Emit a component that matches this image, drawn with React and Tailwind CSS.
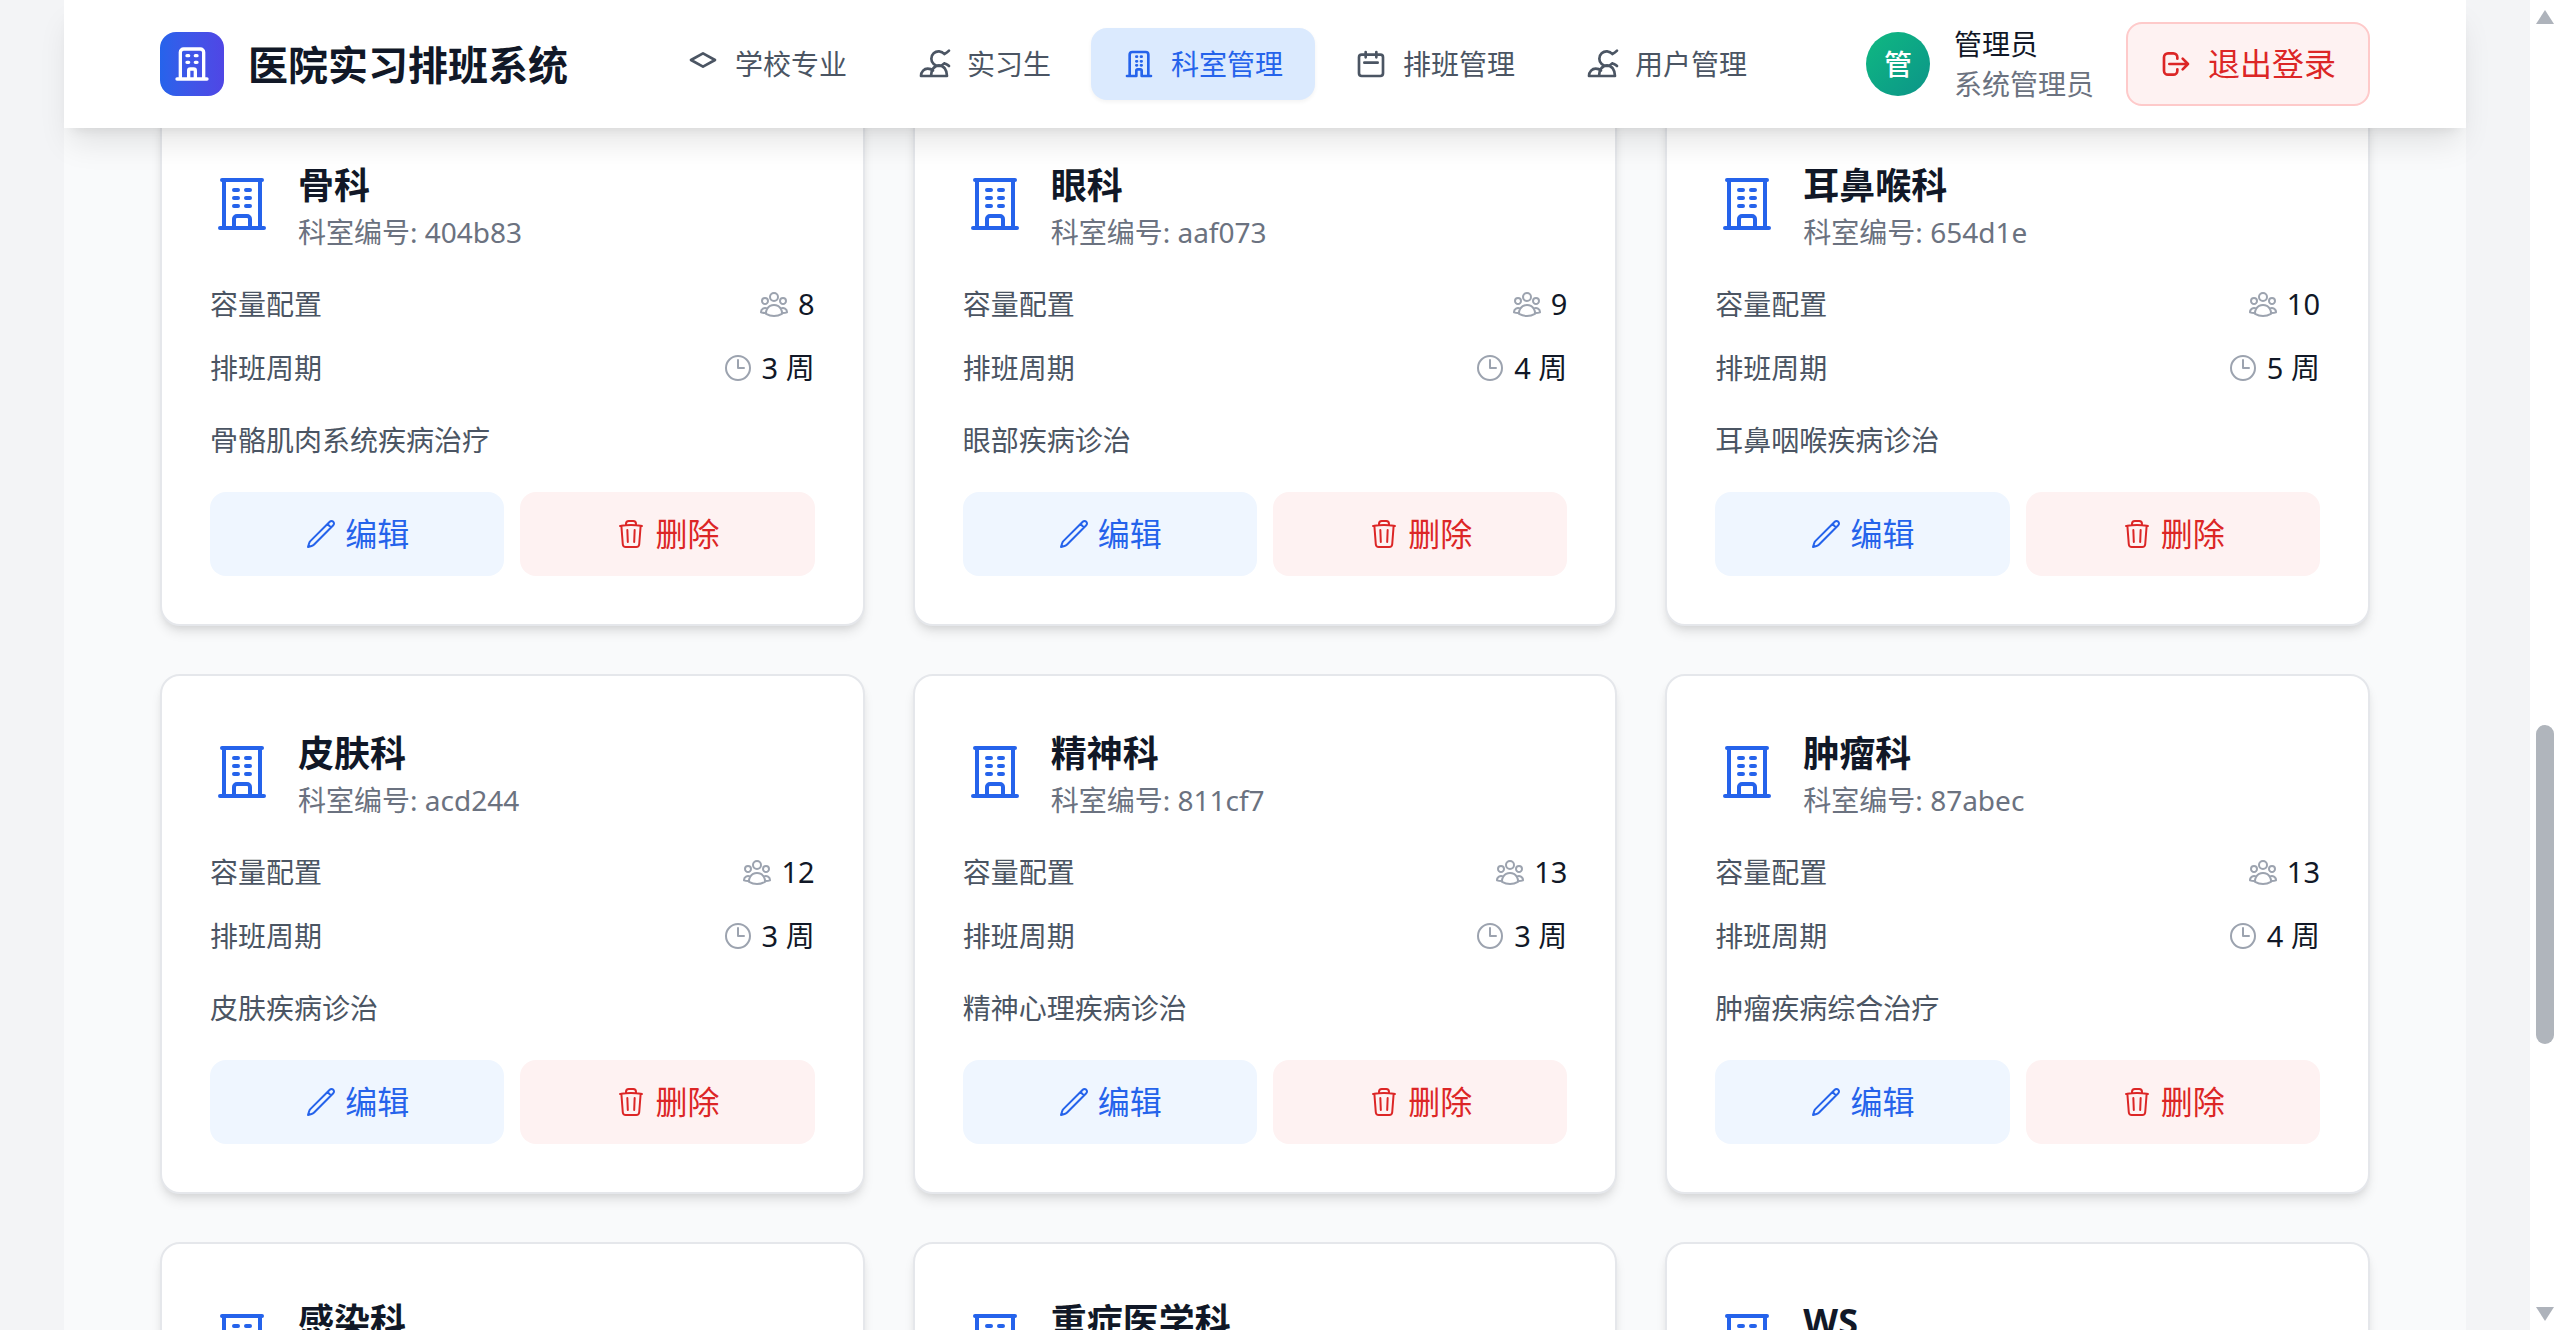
const navItems = [
    { label: '学校专业', icon: 'cap' },
    { label: '实习生', icon: 'people' },
    { label: '科室管理', icon: 'dept', active: true },
    { label: '排班管理', icon: 'calendar' },
    { label: '用户管理', icon: 'people' },
];

const departments = [
    { name: '骨科', code: '404b83', capacity: 8, weeks: 3, desc: '骨骼肌肉系统疾病治疗' },
    { name: '眼科', code: 'aaf073', capacity: 9, weeks: 4, desc: '眼部疾病诊治' },
    { name: '耳鼻喉科', code: '654d1e', capacity: 10, weeks: 5, desc: '耳鼻咽喉疾病诊治' },
    { name: '皮肤科', code: 'acd244', capacity: 12, weeks: 3, desc: '皮肤疾病诊治' },
    { name: '精神科', code: '811cf7', capacity: 13, weeks: 3, desc: '精神心理疾病诊治' },
    { name: '肿瘤科', code: '87abec', capacity: 13, weeks: 4, desc: '肿瘤疾病综合治疗' },
    { name: '感染科' },
    { name: '重症医学科' },
    { name: 'WS' },
];

const Icon = ({ d, className, width = 2 }) => (
    <svg viewBox="0 0 24 24" fill="none" stroke="currentColor" strokeWidth={width} strokeLinecap="round" strokeLinejoin="round" className={className}>
        <path d={d} />
    </svg>
);

const paths = {
    building: 'M19 21V5a2 2 0 00-2-2H7a2 2 0 00-2 2v16m14 0h2m-2 0h-5m-9 0H3m2 0h5M9 7h1m-1 4h1m4-4h1m-1 4h1m-5 10v-5a1 1 0 011-1h2a1 1 0 011 1v5m-4 0h4',
    dept: 'M19 21V5a2 2 0 00-2-2H7a2 2 0 00-2 2v16m14 0h2m-2 0h-5m-9 0H3m2 0h5M10 6.5h.5m-.5 3.5h.5m-.5 3h.5m3-6.5h.5m-.5 3.5h.5m-.5 3h.5M10 21v-4a1 1 0 011-1h2a1 1 0 011 1v4',
    office: 'M3.75 21h16.5M4.5 3h15M5.25 3v18m13.5-18v18M9 6.75h1.5m-1.5 3h1.5m-1.5 3h1.5m3-6H15m-1.5 3H15m-1.5 3H15M9 21v-3.375c0-.621.504-1.125 1.125-1.125h3.75c.621 0 1.125.504 1.125 1.125V21',
    cap: 'M12 14l9-5-9-5-9 5 9 5z',
    people: 'M1.5 21H21c0-4.500-2.500-8-6-8s-6 3.500-6 8M1.500 21c0-3.500 2.500-5.500 5-5.500 1.500 0 3 .5 4 1.500M19 4.500a5.500 5.500 0 100 7M19 4.500c1-.5 2.500-1.500 3.500-2.500M19 11.500c1 .5 2.500 1 3.500 2',
    calendar: 'M8 7V3m8 4V3m-9 8h10M5 21h14a2 2 0 002-2V7a2 2 0 00-2-2H5a2 2 0 00-2 2v12a2 2 0 002 2z',
    logout: 'M17 16l4-4m0 0l-4-4m4 4H7m6 4v1a3 3 0 01-3 3H6a3 3 0 01-3-3V7a3 3 0 013-3h4a3 3 0 013 3v1',
    group: 'M18 18.72a9.094 9.094 0 0 0 3.741-.479 3 3 0 0 0-4.682-2.72m.94 3.198.001.031c0 .225-.012.447-.037.666A11.944 11.944 0 0 1 12 21c-2.17 0-4.207-.576-5.963-1.584A6.062 6.062 0 0 1 6 18.719m12 0a5.971 5.971 0 0 0-.941-3.197m0 0A5.995 5.995 0 0 0 12 12.75a5.995 5.995 0 0 0-5.058 2.772m0 0a3 3 0 0 0-4.681 2.72 8.986 8.986 0 0 0 3.74.477m.94-3.197a5.971 5.971 0 0 0-.94 3.197M15 6.75a3 3 0 1 1-6 0 3 3 0 0 1 6 0Zm6 3a2.25 2.25 0 1 1-4.5 0 2.25 2.25 0 0 1 4.5 0Zm-13.5 0a2.25 2.25 0 1 1-4.5 0 2.25 2.25 0 0 1 4.5 0Z',
    clock: 'M12 6v6h4.5m4.5 0a9 9 0 1 1-18 0 9 9 0 0 1 18 0Z',
    pencil: 'm16.862 4.487 1.687-1.688a1.875 1.875 0 1 1 2.652 2.652L6.832 19.82a4.5 4.5 0 0 1-1.897 1.13l-2.685.8.8-2.685a4.5 4.5 0 0 1 1.13-1.897L16.863 4.487Zm0 0L19.5 7.125',
    trash: 'm14.74 9-.346 9m-4.788 0L9.26 9m9.968-3.21c.342.052.682.107 1.022.166m-1.022-.165L18.16 19.673a2.25 2.25 0 0 1-2.244 2.077H8.084a2.25 2.25 0 0 1-2.244-2.077L4.772 5.79m14.456 0a48.108 48.108 0 0 0-3.478-.397m-12 .562c.34-.059.68-.114 1.022-.165m0 0a48.11 48.11 0 0 1 3.478-.397m7.5 0v-.916c0-1.18-.91-2.164-2.09-2.201a51.964 51.964 0 0 0-3.32 0c-1.18.037-2.09 1.022-2.09 2.201v.916m7.5 0a48.667 48.667 0 0 0-7.5 0',
};

const Header = () => (
    <header className="relative z-10 flex h-[128px] shrink-0 items-center justify-between bg-white px-24 shadow-[0_20px_30px_-6px_rgb(0_0_0/0.1),0_8px_12px_-8px_rgb(0_0_0/0.1)]">
        <div className="flex items-center gap-6">
            <div className="flex h-16 w-16 items-center justify-center rounded-2xl bg-gradient-to-r from-[#2563eb] to-[#4f46e5] text-white">
                <Icon d={paths.building} className="h-10 w-10" />
            </div>
            <h1 className="pt-0.5 text-[40px] leading-[54px] font-bold text-[#111827]">医院实习排班系统</h1>
        </div>
        <nav className="flex items-center gap-2">
            {navItems.map((item) => (
                <a
                    key={item.label}
                    className={`flex items-center gap-4 rounded-2xl px-8 py-4 text-[28px] leading-10 ${item.active ? 'bg-[#dbeafe] text-[#2563eb] shadow-[0_2px_4px_0_rgb(0_0_0/0.05)]' : 'text-[#4b5563]'}`}
                >
                    <Icon d={paths[item.icon]} className="h-8 w-8" />
                    {item.label}
                </a>
            ))}
        </nav>
        <div className="flex items-center gap-8">
            <div className="flex items-center gap-6">
                <div className="flex h-16 w-16 items-center justify-center rounded-full bg-gradient-to-br from-[#10b981] to-[#0d9488] text-[28px] leading-10 font-medium text-white">管</div>
                <div>
                    <p className="text-[28px] leading-10 text-[#111827]">管理员</p>
                    <p className="text-[28px] leading-10 text-[#6b7280]">系统管理员</p>
                </div>
            </div>
            <button className="flex items-center gap-4 rounded-2xl border-2 border-[#fecaca] bg-[#fef2f2] px-8 py-4 text-[32px] leading-12 text-[#dc2626]">
                <Icon d={paths.logout} className="h-8 w-8" />
                退出登录
            </button>
        </div>
    </header>
);

const DepartmentCard = ({ dept }) => (
    <div className="h-[520px] rounded-[20px] border-2 border-[#e5e7eb] bg-white p-12 shadow-[0_8px_12px_-2px_rgb(0_0_0/0.1),0_4px_8px_-4px_rgb(0_0_0/0.1)]">
        <div className="mb-8 flex items-center gap-6">
            <Icon d={paths.office} width={1.5} className="h-16 w-16 shrink-0 text-[#2563eb]" />
            <div className="h-24">
                <h3 className="pt-1 text-[36px] leading-[52px] font-bold text-[#111827]">{dept.name}</h3>
                {dept.code && <p className="text-[28px] leading-10 text-[#6b7280]">科室编号: {dept.code}</p>}
            </div>
        </div>
        {dept.code && (
            <>
                <div className="space-y-6">
                    <div className="flex h-10 items-center justify-between">
                        <span className="text-[28px] leading-10 text-[#4b5563]">容量配置</span>
                        <span className="flex items-center gap-2 text-[29px] leading-10 text-[#111827]">
                            <Icon d={paths.group} width={1.5} className="h-8 w-8 text-[#9ca3af]" />
                            {dept.capacity}
                        </span>
                    </div>
                    <div className="flex h-10 items-center justify-between">
                        <span className="text-[28px] leading-10 text-[#4b5563]">排班周期</span>
                        <span className="flex items-center gap-2 text-[29px] leading-10 text-[#111827]">
                            <Icon d={paths.clock} width={1.5} className="h-8 w-8 text-[#9ca3af]" />
                            {dept.weeks} 周
                        </span>
                    </div>
                </div>
                <p className="mt-8 text-[28px] leading-10 text-[#4b5563]">{dept.desc}</p>
                <div className="mt-8 flex gap-4">
                    <button className="flex h-[84px] flex-1 items-center justify-center gap-2 rounded-2xl bg-[#eff6ff] text-[32px] text-[#2563eb]">
                        <Icon d={paths.pencil} width={1.5} className="h-8 w-8" />
                        编辑
                    </button>
                    <button className="flex h-[84px] flex-1 items-center justify-center gap-2 rounded-2xl bg-[#fef2f2] text-[32px] text-[#dc2626]">
                        <Icon d={paths.trash} width={1.5} className="h-8 w-8" />
                        删除
                    </button>
                </div>
            </>
        )}
    </div>
);

const ScrollBar = () => (
    <div className="flex w-[30px] shrink-0 flex-col items-center bg-white pt-[10px]">
        <div className="h-0 w-0 border-x-[9px] border-b-[14px] border-x-transparent border-b-[#aeb3bb]"></div>
        <div className="mt-[701px] h-[319px] w-[18px] rounded-[9px] bg-[#b0b5bc]"></div>
        <div className="mt-[263px] h-0 w-0 border-x-[9px] border-t-[14px] border-x-transparent border-t-[#aeb3bb]"></div>
    </div>
);

const App = () => {
    return (
        <div className="flex h-[1330px] overflow-hidden bg-[#f3f4f6] font-['Noto_Sans','Noto_Sans_CJK_SC',sans-serif]">
            <div className="min-w-0 flex-1">
                <div className="mx-auto flex h-full w-[2402px] flex-col bg-[#f9fafb]">
                    <Header />
                    <main className="-mt-[22px] grid grid-cols-3 gap-12 px-24">
                        {departments.map((dept) => (
                            <DepartmentCard key={dept.name} dept={dept} />
                        ))}
                    </main>
                </div>
            </div>
            <ScrollBar />
        </div>
    );
};

export default App;
